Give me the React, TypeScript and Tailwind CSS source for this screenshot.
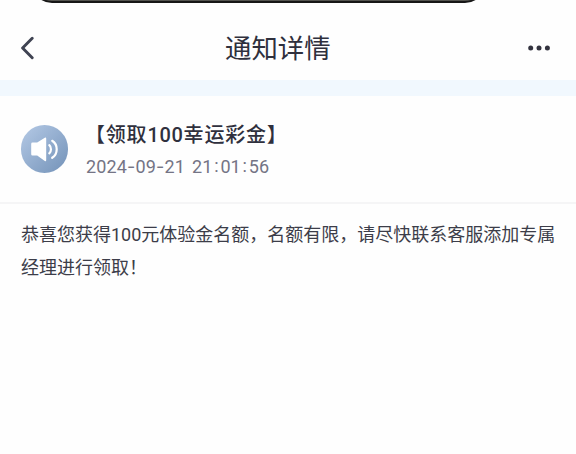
function BackIcon() {
  return (
    <svg width="14" height="24" viewBox="0 0 14 24" fill="none">
      <path
        d="M12.2 2.2 2.6 12l9.6 9.8"
        stroke="#3f4352"
        strokeWidth="2.9"
        strokeLinecap="round"
        strokeLinejoin="round"
      />
    </svg>
  );
}

function MoreIcon() {
  return (
    <svg width="24" height="6" viewBox="0 0 24 6" fill="#33333f">
      <circle cx="3.7" cy="3" r="2.5" />
      <circle cx="12" cy="3" r="2.5" />
      <circle cx="20.4" cy="3" r="2.5" />
    </svg>
  );
}

function SpeakerIcon() {
  return (
    <svg width="47" height="48" viewBox="0 0 47 48" fill="none">
      <path
        d="M11.5 17.6h4.7l7.6-4.8c.8-.5 1.4-.1 1.4.8v21.6c0 .9-.7 1.2-1.4.7l-7.6-5.3h-4.7a1.3 1.3 0 0 1-1.3-1.3V18.9a1.3 1.3 0 0 1 1.3-1.3Z"
        fill="#fff"
      />
      <path
        d="M28.3 20.2c2.2 1.9 2.2 6.3 0 8.2M31.2 15.8c6 3.8 6 13.2 0 17"
        stroke="#fff"
        strokeWidth="2.2"
        strokeLinecap="round"
      />
    </svg>
  );
}

const separators: Record<string, string> = {
  "-": "inline-block w-[8.6px] text-center font-['Inter',sans-serif] leading-none",
  ":": "relative -top-px inline-block w-2 text-center leading-none",
  " ": "inline-block w-[7px] whitespace-pre leading-none",
};

function Timestamp({ value }: { value: string }) {
  return (
    <p className="mt-px font-['Roboto',sans-serif] text-[18px] leading-8 tracking-[0.1px] text-[#747485]">
      {value.split(/([-: ])/).map((part, i) => (
        <span key={i} className={separators[part]}>
          {part}
        </span>
      ))}
    </p>
  );
}

export default function App() {
  return (
    <div className="relative h-[454px] w-[576px] overflow-hidden bg-[#fefefe] font-['Noto_Sans_CJK_SC',sans-serif]">
      {/* Bottom edge of the device cutout */}
      <div className="absolute -top-[37px] left-[32px] h-10 w-[453px] rounded-[20px] border-2 border-[#171717] bg-[#555550]" />

      {/* Header */}
      <header className="grid h-20 grid-cols-[205px_1fr_24px] items-center pt-4 pr-[25px] pl-5">
        <button type="button">
          <BackIcon />
        </button>
        <h1 className="-mt-0.5 text-[26.4px] leading-8 text-[#2f303d]">
          通知详情
        </h1>
        <button type="button">
          <MoreIcon />
        </button>
      </header>
      <div className="h-4 bg-[#f1f8fe]" />

      {/* Notice summary */}
      <section className="flex h-[108px] items-center gap-[18px] border-b-2 border-[#f5f5f6] pl-[21px]">
        <div className="h-12 w-[47px] rounded-full bg-linear-to-br from-[#b5cae6] to-[#7392b8]">
          <SpeakerIcon />
        </div>
        <div className="pt-[3px]">
          <h2 className="-ml-px text-[20px] leading-8 font-medium tracking-[0.8px] text-[#2f303d]">
            【领取
            <span className="font-['Roboto',sans-serif] leading-none tracking-[0.7px]">
              100
            </span>
            幸运彩金】
          </h2>
          <Timestamp value="2024-09-21 21:01:56" />
        </div>
      </section>

      {/* Notice body */}
      <p className="pt-[13px] pl-[21px] text-[18px] leading-[33px] text-[#3c3d49]">
        恭喜您获得
        <span className="font-['Roboto',sans-serif] leading-none">100</span>
        元体验金名额，名额有限，请尽快联系客服添加专属
        <br />
        经理进行领取！
      </p>
    </div>
  );
}
